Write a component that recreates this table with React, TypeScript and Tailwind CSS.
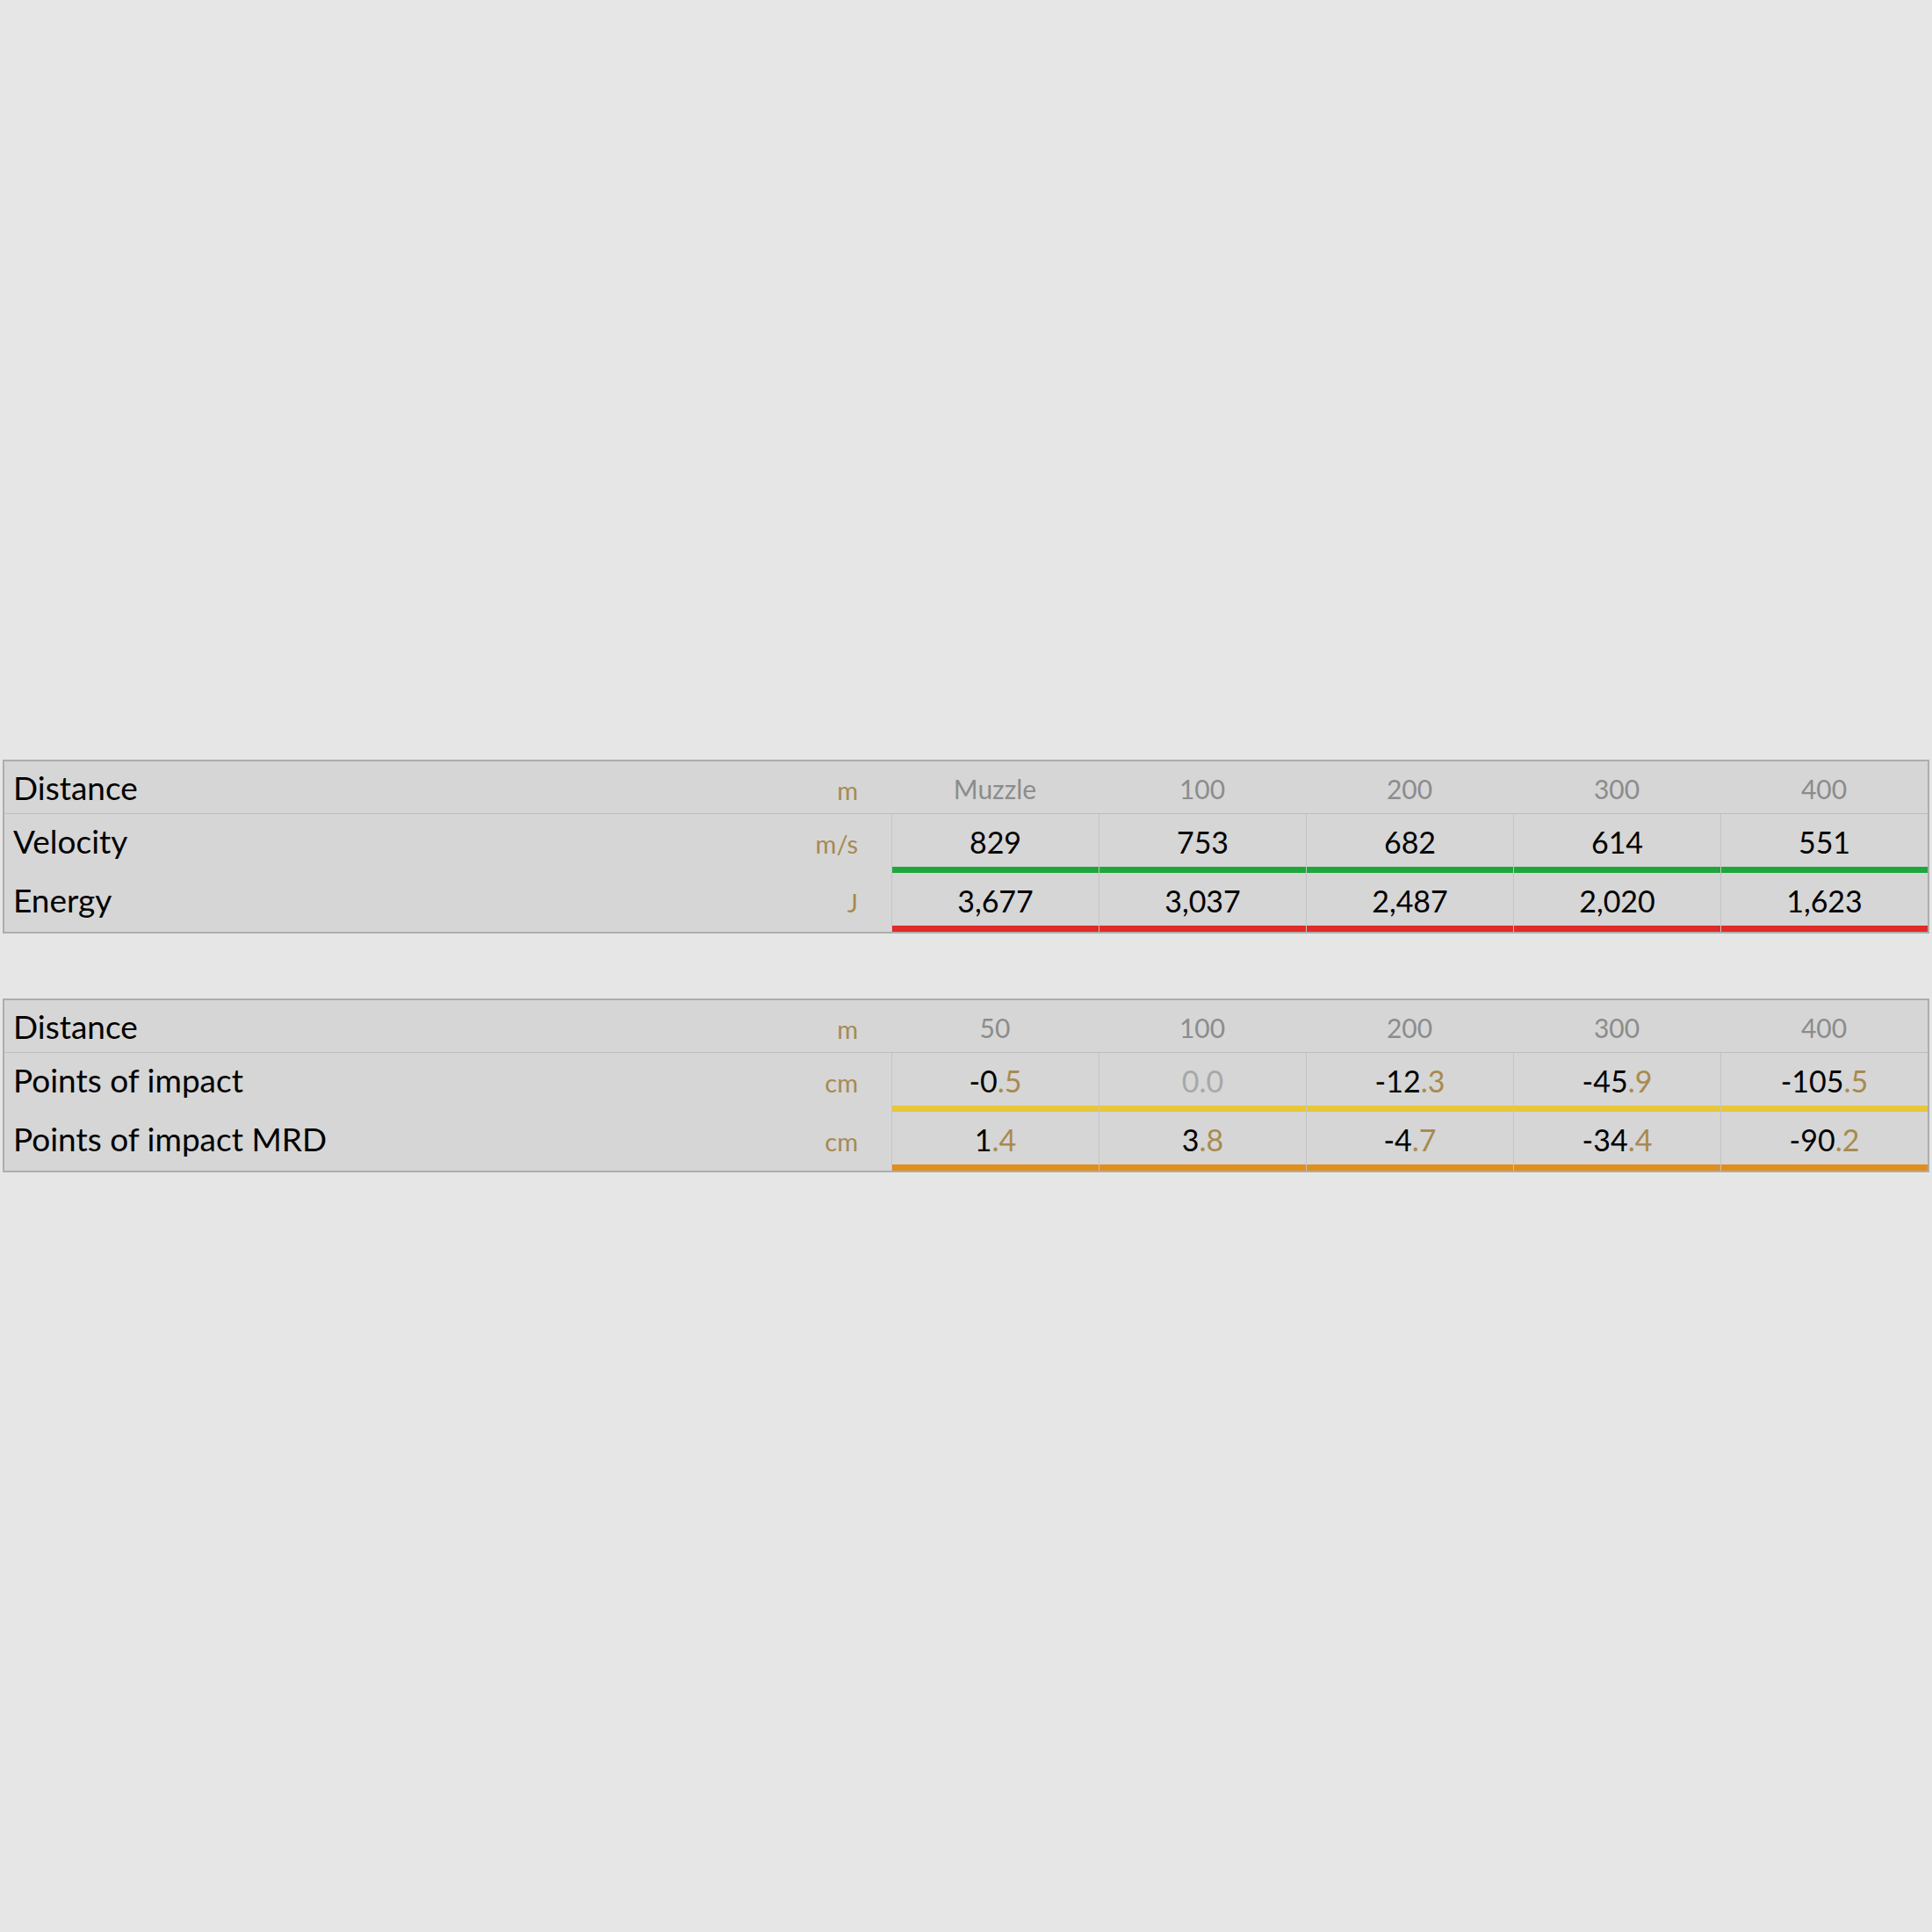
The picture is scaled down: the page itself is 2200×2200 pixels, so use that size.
const font = { fontFamily: 'Lato, "Open Sans", sans-serif' };

type Cell = { whole: string; frac?: string; muted?: boolean };

type Row = { label: string; unit: string; bar: string; cells: Cell[] };

type Table = { distances: string[]; rows: Row[] };

const tables: Table[] = [
    {
        distances: ['Muzzle', '100', '200', '300', '400'],
        rows: [
            {
                label: 'Velocity',
                unit: 'm/s',
                bar: 'bg-[#1ea63c]',
                cells: [{ whole: '829' }, { whole: '753' }, { whole: '682' }, { whole: '614' }, { whole: '551' }],
            },
            {
                label: 'Energy',
                unit: 'J',
                bar: 'bg-[#e02b27]',
                cells: [{ whole: '3,677' }, { whole: '3,037' }, { whole: '2,487' }, { whole: '2,020' }, { whole: '1,623' }],
            },
        ],
    },
    {
        distances: ['50', '100', '200', '300', '400'],
        rows: [
            {
                label: 'Points of impact',
                unit: 'cm',
                bar: 'bg-[#e8c63a]',
                cells: [
                    { whole: '-0', frac: '.5' },
                    { whole: '0.0', muted: true },
                    { whole: '-12', frac: '.3' },
                    { whole: '-45', frac: '.9' },
                    { whole: '-105', frac: '.5' },
                ],
            },
            {
                label: 'Points of impact MRD',
                unit: 'cm',
                bar: 'bg-[#e08e1c]',
                cells: [
                    { whole: '1', frac: '.4' },
                    { whole: '3', frac: '.8' },
                    { whole: '-4', frac: '.7' },
                    { whole: '-34', frac: '.4' },
                    { whole: '-90', frac: '.2' },
                ],
            },
        ],
    },
];

function LabelCell({ label, unit }: { label: string; unit: string }) {
    return (
        <div className="flex items-center pl-[10px] pr-[38px]">
            <div className="flex w-full items-baseline justify-between">
                <span className="text-[37px] leading-none text-black">{label}</span>
                <span className="text-[29px] leading-none text-[#a88a50]">{unit}</span>
            </div>
        </div>
    );
}

function BallisticTable({ table }: { table: Table }) {
    return (
        <div className="grid grid-cols-[1fr_repeat(5,236px)] border-2 border-[#adadad] bg-[#d6d6d6]">
            {/* header */}
            <div className="col-span-6 grid h-[60px] grid-cols-subgrid border-b border-[#bdbdbd]">
                <LabelCell label="Distance" unit="m" />
                {table.distances.map((d, i) => (
                    <div key={i} className="flex items-center justify-center pt-[3px] text-[30px] text-[#8c8c8c]">
                        {d}
                    </div>
                ))}
            </div>
            {table.rows.map((row) => (
                <div key={row.label} className="col-span-6 grid h-[67px] grid-cols-subgrid">
                    <div className="grid pb-[7px]">
                        <LabelCell label={row.label} unit={row.unit} />
                    </div>
                    {row.cells.map((c, i) => (
                        <div key={i} className="flex flex-col border-l border-[#c4c4c4]">
                            <div className="flex flex-1 items-center justify-center pt-[2px] text-[34px]">
                                {c.muted ? (
                                    <span className="text-[#a8a8a8]">{c.whole}</span>
                                ) : (
                                    <span className="text-black">
                                        {c.whole}
                                        {c.frac && <span className="text-[#a88a50]">{c.frac}</span>}
                                    </span>
                                )}
                            </div>
                            <div className={`h-[7px] ${row.bar}`} />
                        </div>
                    ))}
                </div>
            ))}
        </div>
    );
}

export default function App() {
    return (
        <div className="flex h-screen flex-col justify-center gap-[74px] bg-[#e6e6e6] px-[3px]" style={font}>
            {tables.map((t, i) => (
                <BallisticTable key={i} table={t} />
            ))}
        </div>
    );
}
